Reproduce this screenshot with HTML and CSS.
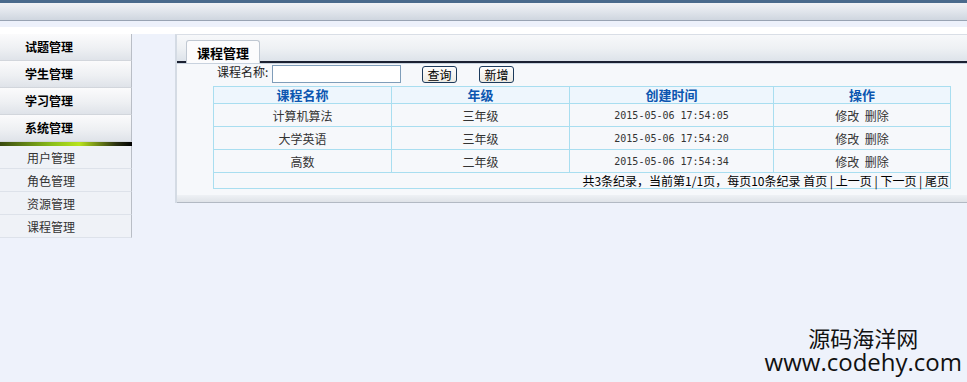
FILE: index.html
```html
<!DOCTYPE html>
<html>
<head>
<meta charset="utf-8">
<link rel="stylesheet" href="styles.css">
</head>
<body>
<div class="topbar">
  <div class="tb-dark"></div>
  <div class="tb-grad"></div>
  <div class="tb-line"></div>
  <div class="tb-light"></div>
  <div class="tb-white"></div>
</div>
<div class="main">
  <div class="sidebar">
    <div class="menu-btn">试题管理</div>
    <div class="menu-btn">学生管理</div>
    <div class="menu-btn">学习管理</div>
    <div class="menu-btn">系统管理</div>
    <div class="menu-bar"></div>
    <div class="sub">用户管理</div>
    <div class="sub">角色管理</div>
    <div class="sub">资源管理</div>
    <div class="sub">课程管理</div>
  </div>
  <div class="panel">
    <div class="panel-head">
      <div class="tab">课程管理</div>
    </div>
    <div class="panel-body">
      <div class="search">
        <span class="label">课程名称:</span>
        <span class="input"></span>
        <span class="btn btn1">查询</span>
        <span class="btn btn2">新增</span>
      </div>
      <table class="grid">
        <tr class="head"><th class="c1">课程名称</th><th class="c2">年级</th><th class="c3">创建时间</th><th class="c4">操作</th></tr>
        <tr><td>计算机算法</td><td>三年级</td><td class="mono">2015-05-06 17:54:05</td><td>修改&nbsp;&nbsp;删除</td></tr>
        <tr><td>大学英语</td><td>三年级</td><td class="mono">2015-05-06 17:54:20</td><td>修改&nbsp;&nbsp;删除</td></tr>
        <tr><td>高数</td><td>二年级</td><td class="mono">2015-05-06 17:54:34</td><td>修改&nbsp;&nbsp;删除</td></tr>
        <tr class="pager"><td colspan="4">共3条纪录，当前第1/1页，每页10条纪录 首页 | 上一页 | 下一页 | 尾页</td></tr>
      </table>
    </div>
    <div class="panel-foot"></div>
  </div>
</div>
<div class="watermark">
  <div class="wm1">源码海洋网</div>
  <div class="wm2">www.codehy.com</div>
</div>
</body>
</html>
```
FILE: styles.css
```css
html, body {
  margin: 0;
  padding: 0;
}
body {
  background: #eef2fb;
  font-family: "Noto Sans CJK SC", "Liberation Sans", sans-serif;
  font-size: 12px;
  color: #333;
  width: 967px;
  height: 382px;
  overflow: hidden;
  position: relative;
}
.topbar .tb-dark { height: 3px; background: #4a6a8c; }
.topbar .tb-grad { height: 17px; background: linear-gradient(#f1f2f5, #e4e8ee 40%, #cfd6df); }
.topbar .tb-line { height: 1px; background: #98a3b3; }
.topbar .tb-light { height: 6px; background: #edf1fb; }
.topbar .tb-white { height: 7px; background: #ffffff; }

.main {
  display: flex;
  align-items: flex-start;
}
.sidebar {
  width: 132px;
  flex: none;
  display: flex;
  flex-direction: column;
}
.menu-btn {
  height: 27px;
  line-height: 26px;
  padding-left: 25px;
  font-weight: bold;
  color: #000;
  background: linear-gradient(#fbfbfc, #eef0f3 55%, #dfe3e9);
  border-right: 1px solid #b9bec6;
  border-bottom: 1px solid #d2d6dc;
  box-sizing: border-box;
}
.menu-bar {
  height: 4px;
  background: linear-gradient(90deg, #3a4a10, #8cc01a 40%, #b8e41e 60%, #2a3010 88%, #000);
}
.sub {
  height: 23px;
  line-height: 23px;
  padding-left: 27px;
  color: #333;
  background: #eff2f7;
  border-right: 1px solid #b9bec6;
  border-bottom: 1px solid #dde2ea;
  box-sizing: border-box;
}

.panel {
  margin-left: 43px;
  flex: 1;
  border-left: 2px solid #d4dbe4;
  border-top: 1px solid #d9dee6;
}
.panel-head {
  height: 26px;
  background: linear-gradient(#f7f8fa, #eef1f4 50%, #dde3ea);
  border-bottom: 2px solid #1b2132;
  display: flex;
  align-items: flex-end;
  padding-left: 9px;
}
.tab {
  width: 74px;
  height: 23px;
  line-height: 23px;
  text-align: center;
  font-weight: bold;
  font-size: 13px;
  color: #000;
  background: #fcfcfd;
  border: 1px solid #c0c8d2;
  border-bottom: none;
  border-radius: 3px 3px 0 0;
  box-sizing: border-box;
  margin-bottom: -2px;
  position: relative;
}
.panel-body {
  background: #f6f8fb;
  padding: 0 0 6px 36px;
  border-top: 1px solid #c8d2de;
}
.search {
  height: 22px;
  display: flex;
  align-items: center;
}
.search .label {
  margin-left: 4px;
  color: #222;
  width: 55px;
  position: relative;
  top: -4px;
}
.search .input {
  display: inline-block;
  width: 129px;
  height: 18px;
  box-sizing: border-box;
  border: 1px solid #7f9db9;
  background: #fff;
  position: relative;
  top: -1px;
}
.btn {
  display: inline-block;
  width: 35px;
  height: 17px;
  line-height: 15px;
  box-sizing: border-box;
  border: 1px solid #1c3a5c;
  border-radius: 3px;
  background: linear-gradient(#ffffff, #ece9e2);
  text-align: center;
  color: #000;
  position: relative;
  top: -1px;
}
.btn1 { margin-left: 21px; }
.btn2 { margin-left: 22px; }

.grid {
  border-collapse: collapse;
  width: 738px;
}
.grid td, .grid th {
  border: 1px solid #a9def0;
  text-align: center;
  padding: 0;
  height: 22px;
  font-weight: normal;
}
.grid tr.head th {
  height: 16px;
  line-height: 14px;
  background: #eef6fd;
  color: #0c56b0;
  font-weight: bold;
  font-size: 13px;
}
.grid .c1 { width: 177px; }
.grid .c2 { width: 177px; }
.grid .c3 { width: 203px; }
.mono {
  font-family: "DejaVu Sans Mono", "Liberation Mono", monospace;
  font-size: 10px;
}
.grid tr.pager td {
  height: 15px;
  line-height: 14px;
  text-align: right;
  color: #000;
  padding-right: 1px;
}
.panel-foot {
  height: 7px;
  background: linear-gradient(#eef1f5, #dfe3e8);
  border-bottom: 1px solid #b2b9c3;
}

.watermark {
  position: absolute;
  right: 5px;
  bottom: 6px;
  text-align: center;
  color: #111;
  font-family: "Noto Sans CJK SC", "Open Sans", sans-serif;
}
.wm1 { font-size: 22px; line-height: 22px; }
.wm2 { font-family: "Open Sans", "Noto Sans", sans-serif; font-size: 24px; line-height: 28px; }
```
